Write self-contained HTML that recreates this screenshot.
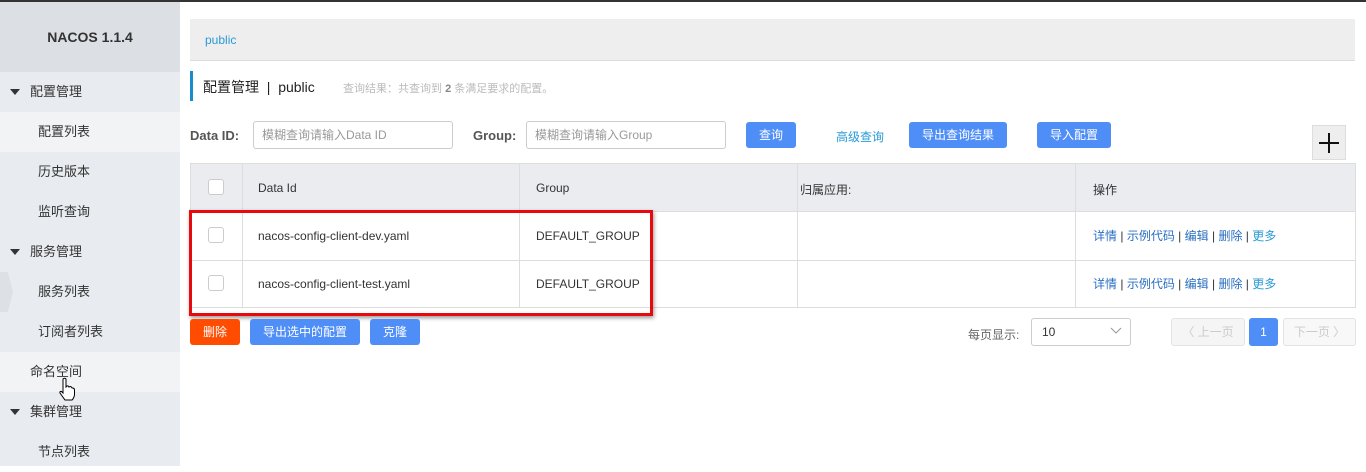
<!DOCTYPE html>
<html><head><meta charset="utf-8"><style>
*{box-sizing:border-box;margin:0;padding:0}
body{width:1366px;height:466px;overflow:hidden;background:#fff;font-family:"Liberation Sans","Noto Sans CJK SC",sans-serif;font-size:12px;color:#333;position:relative}
.a{position:absolute}
.side{left:0;top:0;width:180px;height:466px;background:#e8ebef}
.logo{left:0;top:2px;width:180px;height:70px;background:#dcdfe4;font-weight:bold;font-size:14px;color:#333;text-align:center;line-height:70px}
.mi{left:0;width:180px;height:40px;line-height:40px;font-size:13px;color:#333}
.btn{background:#4f8ef7;color:#fff;border-radius:3px;text-align:center;font-size:12px;line-height:26px;height:26px}
.inp{border:1px solid #ccc;border-radius:3px;height:28px;line-height:26px;padding-left:8px;color:#999}
.cb{width:16px;height:16px;border:1px solid #ccc;border-radius:3px;background:#fff}
.lnk{color:#2a6fc1}
</style></head><body>
<div class="a side"></div>
<div class="a logo">NACOS 1.1.4</div>
<div class="a mi" style="top:72px;padding-left:30px">配置管理</div>
<div class="a" style="left:10px;top:89px;border-left:5px solid transparent;border-right:5px solid transparent;border-top:6px solid #333"></div>
<div class="a mi" style="top:112px;padding-left:38px;background:#f2f3f5">配置列表</div>
<div class="a mi" style="top:152px;padding-left:38px">历史版本</div>
<div class="a mi" style="top:192px;padding-left:38px">监听查询</div>
<div class="a mi" style="top:232px;padding-left:30px">服务管理</div>
<div class="a" style="left:10px;top:249px;border-left:5px solid transparent;border-right:5px solid transparent;border-top:6px solid #333"></div>
<div class="a mi" style="top:272px;padding-left:38px">服务列表</div>
<div class="a" style="left:0;top:272px;width:13px;height:40px;background:#dde0e4;clip-path:polygon(0 0,60% 0,100% 50%,60% 100%,0 100%)"></div>
<div class="a mi" style="top:312px;padding-left:38px">订阅者列表</div>
<div class="a mi" style="top:352px;padding-left:30px;background:#f2f3f5">命名空间</div>
<div class="a mi" style="top:392px;padding-left:30px">集群管理</div>
<div class="a" style="left:10px;top:409px;border-left:5px solid transparent;border-right:5px solid transparent;border-top:6px solid #333"></div>
<div class="a mi" style="top:432px;padding-left:38px">节点列表</div>
<svg class="a" style="left:58px;top:377px" width="18" height="24" viewBox="0 0 18 24"><path d="M5 2 Q6.5 0.5 8 2 L8 10 L9 9 Q10.5 8.5 11 10 L12 9.5 Q13.5 9.5 14 11 L15 11 Q16.5 11.5 16.5 13 L16.5 18 Q16 21 14 23 L7 23 L2 16 Q1.5 14 3.5 14.5 L5 16 Z" fill="#fff" stroke="#000" stroke-width="1"/></svg>
<div class="a" style="left:0;top:0;width:1366px;height:2px;background:#333"></div>

<div class="a" style="left:190px;top:19px;width:1165px;height:42px;background:#eee;border-bottom:1px solid #ddd;padding-left:15px;line-height:42px;color:#2a9ad6">public</div>
<div class="a" style="left:190px;top:71px;width:3px;height:30px;background:#1a8ccc"></div>
<div class="a" style="left:203px;top:77px;font-size:14px;color:#222">配置管理 &nbsp;|&nbsp; public</div>
<div class="a" style="left:343px;top:80px;color:#bbb;font-size:11px">查询结果：共查询到 <b style="color:#888">2</b> 条满足要求的配置。</div>

<div class="a" style="left:190px;top:128px;font-weight:bold;font-size:13px;color:#555">Data ID:</div>
<div class="a inp" style="left:253px;top:121px;width:200px">模糊查询请输入Data ID</div>
<div class="a" style="left:473px;top:128px;font-weight:bold;font-size:13px;color:#555">Group:</div>
<div class="a inp" style="left:526px;top:121px;width:200px">模糊查询请输入Group</div>
<div class="a btn" style="left:746px;top:122px;width:50px">查询</div>
<div class="a" style="left:836px;top:128px;color:#2a9ad6">高级查询</div>
<div class="a btn" style="left:909px;top:122px;width:98px">导出查询结果</div>
<div class="a btn" style="left:1037px;top:122px;width:74px">导入配置</div>
<div class="a" style="left:1312px;top:125px;width:34px;height:35px;background:#eee;border:1px solid #ddd"></div>
<div class="a" style="left:1319px;top:142px;width:20px;height:2px;background:#111"></div>
<div class="a" style="left:1328px;top:133px;width:2px;height:20px;background:#111"></div>

<div class="a" style="left:190px;top:163px;width:1166px;height:145px;border:1px solid #ddd">
<div class="a" style="left:0;top:0;width:1164px;height:48px;background:#ebecf0;border-bottom:1px solid #ddd"></div>
<div class="a" style="left:0;top:96px;width:1164px;height:1px;background:#ddd"></div>
<div class="a" style="left:51px;top:0;width:1px;height:143px;background:#ddd"></div>
<div class="a" style="left:328px;top:0;width:1px;height:143px;background:#ddd"></div>
<div class="a" style="left:606px;top:0;width:1px;height:143px;background:#ddd"></div>
<div class="a" style="left:884px;top:0;width:1px;height:143px;background:#ddd"></div>
<div class="a cb" style="left:17px;top:15px"></div>
<div class="a cb" style="left:17px;top:63px"></div>
<div class="a cb" style="left:17px;top:111px"></div>
<div class="a" style="left:67px;top:17px">Data Id</div>
<div class="a" style="left:345px;top:17px">Group</div>
<div class="a" style="left:609px;top:17px">归属应用:</div>
<div class="a" style="left:902px;top:17px">操作</div>
<div class="a" style="left:67px;top:65px">nacos-config-client-dev.yaml</div>
<div class="a" style="left:345px;top:65px">DEFAULT_GROUP</div>
<div class="a" style="left:67px;top:113px">nacos-config-client-test.yaml</div>
<div class="a" style="left:345px;top:113px">DEFAULT_GROUP</div>
<div class="a" style="left:902px;top:63px"><span class="lnk">详情</span> | <span class="lnk">示例代码</span> | <span class="lnk">编辑</span> | <span class="lnk">删除</span> | <span style="color:#2a9ad6">更多</span></div>
<div class="a" style="left:902px;top:111px"><span class="lnk">详情</span> | <span class="lnk">示例代码</span> | <span class="lnk">编辑</span> | <span class="lnk">删除</span> | <span style="color:#2a9ad6">更多</span></div>
</div>
<div class="a" style="left:189px;top:210px;width:464px;height:106px;border:3px solid #e8090f;box-shadow:1px 2px 4px rgba(0,0,0,.4)"></div>

<div class="a btn" style="left:190px;top:319px;width:50px;background:#ff4c00">删除</div>
<div class="a btn" style="left:250px;top:319px;width:110px">导出选中的配置</div>
<div class="a btn" style="left:370px;top:319px;width:50px">克隆</div>
<div class="a" style="left:968px;top:326px;color:#666">每页显示:</div>
<div class="a" style="left:1031px;top:318px;width:100px;height:28px;border:1px solid #ccc;border-radius:3px;padding-left:10px;line-height:26px">10</div>
<svg class="a" style="left:1110px;top:327px" width="12" height="8"><path d="M1 1 L6 6 L11 1" fill="none" stroke="#999" stroke-width="1"/></svg>
<div class="a" style="left:1171px;top:318px;width:74px;height:28px;border:1px solid #e3e3e3;background:#f5f5f5;border-radius:3px;color:#ccc;text-align:center;line-height:26px">〈 上一页</div>
<div class="a" style="left:1249px;top:318px;width:29px;height:28px;background:#4f8ef7;border-radius:3px;color:#fff;text-align:center;line-height:28px">1</div>
<div class="a" style="left:1283px;top:318px;width:73px;height:28px;border:1px solid #e3e3e3;background:#f8f8f8;border-radius:3px;color:#ccc;text-align:center;line-height:26px">下一页 〉</div>
</body></html>
